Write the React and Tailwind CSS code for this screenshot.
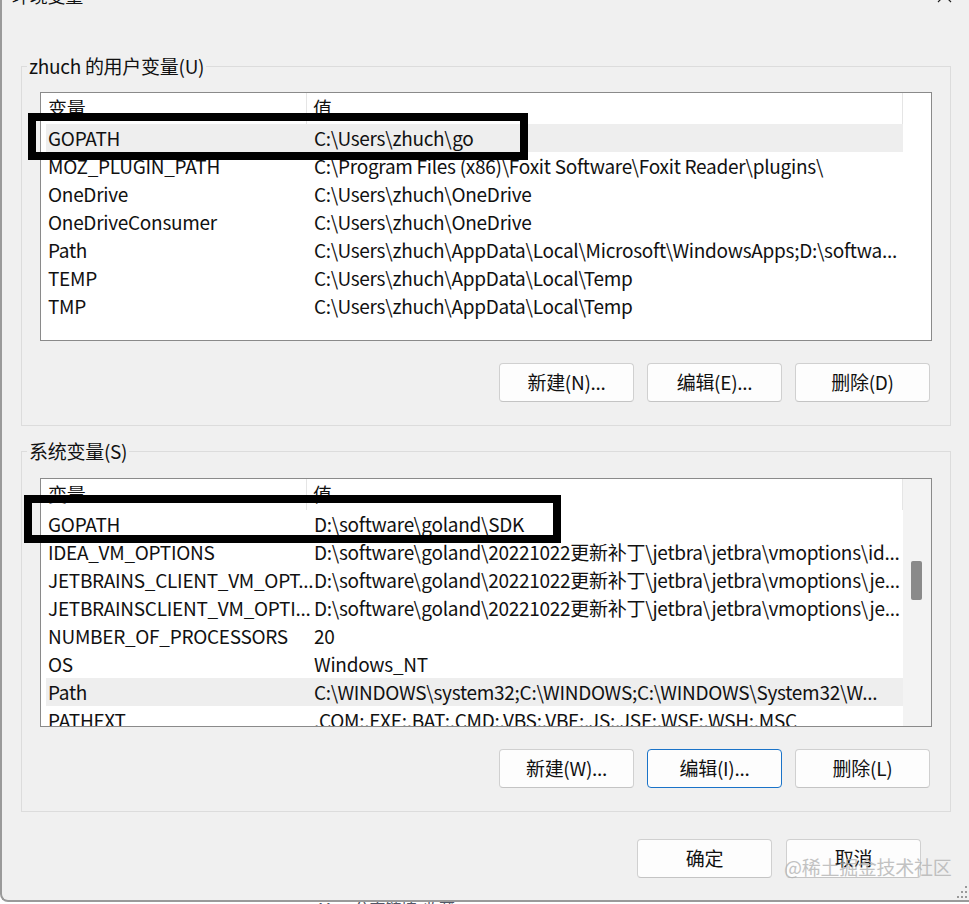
import React from 'react';

const userVars = [
  ['GOPATH', 'C:\\Users\\zhuch\\go'],
  ['MOZ_PLUGIN_PATH', 'C:\\Program Files (x86)\\Foxit Software\\Foxit Reader\\plugins\\'],
  ['OneDrive', 'C:\\Users\\zhuch\\OneDrive'],
  ['OneDriveConsumer', 'C:\\Users\\zhuch\\OneDrive'],
  ['Path', 'C:\\Users\\zhuch\\AppData\\Local\\Microsoft\\WindowsApps;D:\\softwa...'],
  ['TEMP', 'C:\\Users\\zhuch\\AppData\\Local\\Temp'],
  ['TMP', 'C:\\Users\\zhuch\\AppData\\Local\\Temp'],
];

const systemVars = [
  ['GOPATH', 'D:\\software\\goland\\SDK'],
  ['IDEA_VM_OPTIONS', 'D:\\software\\goland\\20221022更新补丁\\jetbra\\jetbra\\vmoptions\\id...'],
  ['JETBRAINS_CLIENT_VM_OPT...', 'D:\\software\\goland\\20221022更新补丁\\jetbra\\jetbra\\vmoptions\\je...'],
  ['JETBRAINSCLIENT_VM_OPTI...', 'D:\\software\\goland\\20221022更新补丁\\jetbra\\jetbra\\vmoptions\\je...'],
  ['NUMBER_OF_PROCESSORS', '20'],
  ['OS', 'Windows_NT'],
  ['Path', 'C:\\WINDOWS\\system32;C:\\WINDOWS;C:\\WINDOWS\\System32\\W...'],
  ['PATHEXT', '.COM;.EXE;.BAT;.CMD;.VBS;.VBE;.JS;.JSE;.WSF;.WSH;.MSC'],
];

const VarList = ({ rows, selected, scroll }) => (
  <div className="flex h-[249px] w-full overflow-hidden border border-[#8a8a8a] bg-white">
    <div className="flex w-[862px] flex-col">
      <div className="flex h-[31px] shrink-0 items-center">
        <div className="flex h-full w-[266px] items-center border-r border-[#e5e5e5] pl-[7px]">变量</div>
        <div className="flex h-full flex-1 items-center border-r border-[#e5e5e5] pl-[6px]">值</div>
      </div>
      {rows.map(([name, value], i) => (
        <div
          key={name + i}
          className={`ml-[5px] flex h-[28px] shrink-0 items-center whitespace-nowrap ${i === selected ? 'bg-[#eeeeee]' : ''}`}
        >
          <div className="w-[261px] shrink-0 pl-[2px]">{name}</div>
          <div className="flex-1 overflow-hidden pl-[7px]">{value}</div>
        </div>
      ))}
    </div>
    <div className={`flex-1 ${scroll ? 'bg-[#f3f3f3]' : ''}`}>
      {scroll && <div className="ml-[8px] mt-[82px] h-[39px] w-[11px] rounded-[2px] bg-[#8a8a8a]" />}
    </div>
  </div>
);

const Button = ({ children, focused }) => (
  <button
    className={`flex h-[39px] w-[135px] items-center justify-center rounded-[4px] border bg-[#fdfdfd] ${
      focused ? 'border-[#1a73c8]' : 'border-[#d0d0d0] border-b-[#c4c4c4]'
    }`}
  >
    {children}
  </button>
);

const Group = ({ title, children, className }) => (
  <fieldset className={`ml-[19px] w-[930px] border border-[#dcdcdc] ${className}`}>
    <legend className="ml-[5px] px-[2px] leading-[24px]">{title}</legend>
    <div className="px-[18px] pb-[23px]">{children}</div>
  </fieldset>
);

export default function App() {
  return (
    <div className="relative h-[904px] w-[969px] overflow-hidden bg-white font-['Noto_Sans_CJK_SC','Noto_Sans',sans-serif] text-[19px] tracking-[-0.28px] text-[#111]">
      <div className="flex h-[902px] flex-col rounded-bl-[8px] border-b-2 border-l-2 border-[#9a9a9a] bg-[#f0f0f0]">
        {/* title bar, mostly scrolled off the top */}
        <div className="flex h-[54px] shrink-0 flex-col">
          <div className="-mt-[20px] flex h-[30px] items-center justify-between pl-[10px] pr-[17px] text-[18px]">
            <span>环境变量</span>
            <svg width="15" height="15" viewBox="0 0 15 15">
              <path d="M1 1L14 14M14 1L1 14" stroke="#222" strokeWidth="1.2" />
            </svg>
          </div>
        </div>

        <Group title="zhuch 的用户变量(U)">
          <div className="mt-[14px]">
            <VarList rows={userVars} selected={0} />
          </div>
          <div className="mt-[22px] flex justify-end gap-[13px] pr-[2px]">
            <Button>新建(N)...</Button>
            <Button>编辑(E)...</Button>
            <Button>删除(D)</Button>
          </div>
        </Group>

        <Group title="系统变量(S)" className="mt-[13px]">
          <div className="mt-[15px]">
            <VarList rows={systemVars} selected={6} scroll />
          </div>
          <div className="mt-[22px] flex justify-end gap-[13px] pr-[2px]">
            <Button>新建(W)...</Button>
            <Button focused>编辑(I)...</Button>
            <Button>删除(L)</Button>
          </div>
        </Group>

        <div className="mt-[27px] flex justify-end gap-[14px] pr-[48px]">
          <Button>确定</Button>
          <Button>取消</Button>
        </div>
      </div>
      <div className="h-[2px] overflow-hidden pl-[318px] text-[16px] text-[#515767]">
        <div className="-mt-[4px] leading-[20px]">M&nbsp;&nbsp;&nbsp;&nbsp;&nbsp;&nbsp;&nbsp;分享链接&nbsp;&nbsp;收藏</div>
      </div>

      {/* annotation boxes drawn over the lists */}
      <div className="absolute left-[28px] top-[113px] h-[47px] w-[500px] border-[8px] border-black" />
      <div className="absolute left-[24px] top-[495px] h-[48px] w-[537px] border-[8px] border-black" />

      {/* watermark */}
      <div className="absolute left-[784px] top-[854px] text-[19px] leading-[26px] text-[#b4b4b4] opacity-80">@稀土掘金技术社区</div>

      {/* resize grip */}
      <svg className="absolute left-[955px] top-[884px]" width="14" height="16" viewBox="0 0 14 16">
        <g fill="#9a9a9a">
          <rect x="10" y="2" width="2" height="2" />
          <rect x="6" y="7" width="2" height="2" />
          <rect x="10" y="7" width="2" height="2" />
          <rect x="2" y="12" width="2" height="2" />
          <rect x="6" y="12" width="2" height="2" />
          <rect x="10" y="12" width="2" height="2" />
        </g>
      </svg>
    </div>
  );
}
